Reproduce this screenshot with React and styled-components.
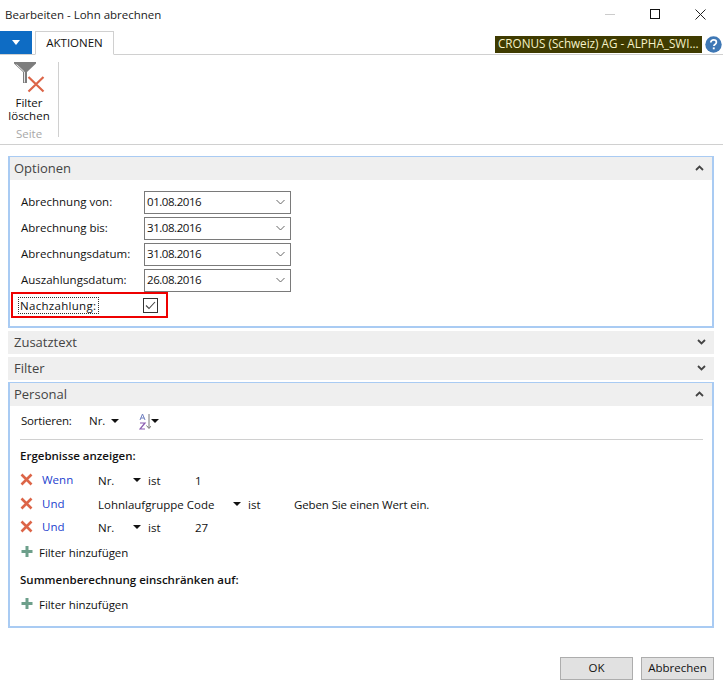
import React from 'react';
import styled, { createGlobalStyle } from 'styled-components';

const Global = createGlobalStyle`
  html, body { margin: 0; padding: 0; background: #fff; }
  body { font-family: "Open Sans", "Noto Sans", sans-serif; font-size: 11.5px; color: #111; }
`;
const Page = styled.div`
  width: 723px; height: 689px; display: flex; flex-direction: column; overflow: hidden; background: #fff;
`;
const TitleBar = styled.div`
  height: 31px; display: flex; align-items: center; justify-content: space-between; padding: 0 0 0 5px; box-sizing: border-box;
`;
const TitleText = styled.div`font-size: 11.5px; color: #222; padding-bottom: 3px;`;
const WinButtons = styled.div`display: flex; align-items: center; padding-right: 17px; gap: 35px; height: 100%; padding-bottom: 3px; box-sizing: border-box;`;
const TabRow = styled.div`
  height: 24px; display: flex; align-items: stretch; border-bottom: 1px solid #d0d0d0; box-sizing: border-box;
`;
const FileButton = styled.div`
  width: 32px; height: 23px; background: #0e6cc4; display: flex; align-items: center; justify-content: center;
`;
const Tab = styled.div`
  margin-left: 3px; width: 79px; height: 24px; box-sizing: border-box; border: 1px solid #d0d0d0; border-bottom: 1px solid #fff;
  display: flex; align-items: center; justify-content: center; font-size: 11.5px; color: #111; background: #fff; padding-bottom: 2px;
`;
const Company = styled.div`
  margin-left: auto; margin-top: 5px; height: 17px; width: 207px; box-sizing: border-box; background: #3f3b00; color: #f6f2c8;
  font-size: 11.7px; line-height: 15px; padding-left: 3px; white-space: nowrap; overflow: hidden;
`;
const Help = styled.div`width: 17px; height: 17px; margin: 5px 1px 0 3px;`;
const Ribbon = styled.div`
  height: 90px; border-bottom: 1px solid #d0d0d0; box-sizing: border-box; display: flex; padding-top: 7px;
`;
const RibbonGroup = styled.div`
  width: 58px; height: 75px; border-right: 1px solid #d0d0d0; display: flex; flex-direction: column; align-items: center;
`;
const RibbonIcon = styled.svg`width: 32px; height: 32px; flex: none;`;
const RibbonLabel = styled.div`font-size: 11.5px; line-height: 13px; text-align: center; color: #111; margin-top: 2px; flex: none;`;
const RibbonCaption = styled.div`font-size: 11.5px; line-height: 14px; color: #a8a8a8; margin-top: 5px; flex: none;`;
const Content = styled.div`padding: 11px 9px 0 8px; display: flex; flex-direction: column; flex: 1;`;
const Panel = styled.section`
  border: 2px solid #a9cbf3; box-sizing: border-box; height: ${p => p.$h}px; margin-bottom: ${p => p.$mb}px;
`;
const PanelHead = styled.div`
  height: 23px; background: #efefef; display: flex; align-items: center; justify-content: space-between;
  padding: 0 8px 2px ${p => p.$flat ? 6 : 4}px; box-sizing: border-box;
  font-size: 13px; color: #444; margin: ${p => p.$flat ? `0 0 ${p.$mb}px 0` : '-1px 0 0 0'};
`;
const Chevron = styled.svg`width: 9px; height: 6px; display: block;`;
const FieldList = styled.div`padding: 11px 0 0 11px; display: flex; flex-direction: column; gap: 3px;`;
const FieldRow = styled.div`display: flex; align-items: center; height: 23px;`;
const FieldLabel = styled.div`width: 123px; font-size: 11.5px; padding-bottom: 2px;`;
const DateInput = styled.div`
  width: 147px; height: 23px; box-sizing: border-box; border: 1px solid #7a7a7a; display: flex; align-items: center;
  justify-content: space-between; padding: 0 5px 2px 2px; font-size: 11.5px; letter-spacing: -0.45px;
`;
const CheckRow = styled.div`
  position: relative; display: flex; align-items: center; height: 23px; margin-top: 2px;
`;
const Highlight = styled.div`
  position: absolute; left: 1px; top: -2px; width: 157px; height: 26px; box-sizing: border-box; border: 2px solid #ee0000; pointer-events: none;
`;
const FocusLabel = styled.div`
  margin-left: 9px; width: 124px; font-size: 11.5px; padding-bottom: 1px;
  & > span { outline: 1px dotted #333; padding: 0 2px 0 1px; letter-spacing: 0.3px; }
`;
const CheckBox = styled.div`
  width: 13px; height: 13px; border: 1px solid #333; display: flex; align-items: center; justify-content: center;
`;
const PersonalBody = styled.div`padding: 0 9px 0 10px;`;
const SortRow = styled.div`display: flex; align-items: center; height: 34px; padding: 0 0 3px 1px; box-sizing: border-box; border-bottom: 1px solid #d0d0d0; font-size: 11.5px;`;
const SortLabel = styled.span`width: 68px; padding-bottom: 2px; letter-spacing: -0.2px;`;
const SortValue = styled.span`padding-bottom: 2px;`;
const AzIcon = styled.svg`width: 12px; height: 17px; margin-left: 20px;`;
const Arrow = styled.i`
  display: inline-block; width: 0; height: 0; border: 4px solid transparent; border-top: 4px solid #111; border-bottom: 0;
  margin-left: ${p => p.$ml ?? 0}px;
`;
const SectionTitle = styled.div`font-weight: 600; font-size: 11.5px; line-height: 16px; margin-top: ${p => p.$mt}px;`;
const FilterRow = styled.div`display: flex; align-items: center; height: 24px; font-size: 11.5px; margin-top: ${p => p.$mt ?? 0}px;`;
const FilterIcon = styled.svg`width: 13px; height: 13px; flex: none; margin-right: ${p => p.$mr}px; margin-bottom: 2px;`;
const Joiner = styled.span`width: 56px; color: #1d3fce; flex: none; padding-bottom: 2px;`;
const FieldName = styled.span`width: ${p => p.$w}px; flex: none; display: flex; align-items: center; justify-content: space-between; padding-right: 7px; box-sizing: border-box;`;
const Op = styled.span`width: ${p => p.$w}px; flex: none;`;
const Hint = styled.span`letter-spacing: -0.12px;`;
const AddRow = styled.div`display: flex; align-items: center; height: 24px; font-size: 11.5px; letter-spacing: -0.05px; margin-top: ${p => p.$mt ?? 0}px;`;
const Footer = styled.div`display: flex; justify-content: flex-end; gap: 8px; padding: 0 9px 9px 0;`;
const Button = styled.button`
  width: 73px; height: 23px; box-sizing: border-box; background: #e1e1e1; border: 1px solid #adadad; font-family: inherit; font-size: 11.5px; color: #111; padding: 0 0 2px;
`;

const Close = () => <svg width="11" height="11" viewBox="0 0 11 11"><path d="M.5.5l10 10M10.5.5l-10 10" stroke="#222" fill="none"/></svg>;
const X = () => <FilterIcon $mr={9} viewBox="0 0 13 13"><path d="M1.5 1.5l10 10M11.5 1.5l-10 10" stroke="#dc6548" strokeWidth="2.6" fill="none"/></FilterIcon>;
const Plus = () => <FilterIcon $mr={6} viewBox="0 0 13 13"><path d="M7 1v11M1.5 6.5h11" stroke="#6d9f8b" strokeWidth="3" fill="none"/></FilterIcon>;
const Down = () => <Chevron viewBox="0 0 9 6"><path d="M1 1l3.5 3.5L8 1" stroke="#444" strokeWidth="1.8" fill="none"/></Chevron>;
const Up = () => <Chevron viewBox="0 0 9 6"><path d="M1 5l3.5-3.5L8 5" stroke="#444" strokeWidth="1.8" fill="none"/></Chevron>;
const Caret = () => <svg width="9" height="6" viewBox="0 0 9 6"><path d="M.5 1l4 4 4-4" stroke="#666" fill="none"/></svg>;

const fields = [['Abrechnung von:', '01.08.2016'], ['Abrechnung bis:', '31.08.2016'], ['Abrechnungsdatum:', '31.08.2016'], ['Auszahlungsdatum:', '26.08.2016']];

export default function App() {
  return (
    <Page>
      <Global />
      <TitleBar>
        <TitleText>Bearbeiten - Lohn abrechnen</TitleText>
        <WinButtons>
          <svg width="10" height="1"><rect width="10" height="1" fill="#ccc"/></svg>
          <svg width="10" height="10"><rect x=".5" y=".5" width="9" height="9" stroke="#111" fill="none"/></svg>
          <Close />
        </WinButtons>
      </TitleBar>
      <TabRow>
        <FileButton><svg width="8" height="5"><path d="M0 0h8L4 5z" fill="#fff"/></svg></FileButton>
        <Tab>AKTIONEN</Tab>
        <Company>CRONUS (Schweiz) AG - ALPHA_SWI...</Company>
        <Help>
          <svg width="17" height="17" viewBox="0 0 17 17"><circle cx="8.5" cy="8.5" r="8.2" fill="#3f78b5"/><path d="M5.8 6.4c0-1.6 1.2-2.5 2.8-2.5s2.8.9 2.8 2.3c0 1.2-.7 1.7-1.5 2.3-.7.5-1 .8-1 1.6" stroke="#fff" strokeWidth="1.7" fill="none"/><rect x="7.8" y="11.4" width="1.9" height="1.9" fill="#fff"/></svg>
        </Help>
      </TabRow>
      <Ribbon>
        <RibbonGroup>
          <RibbonIcon viewBox="0 0 32 32">
            <path d="M1 0h22v1.5L14 10v11h-4V10L1 1.5z" fill="#7d7d7d"/>
            <path d="M3.5 2.5l8 7.5v10.5" stroke="#e8e8e8" fill="none"/>
            <path d="M15.5 15l15 14.5M30.5 15l-15 14.5" stroke="#dc6548" strokeWidth="2.2" fill="none"/>
          </RibbonIcon>
          <RibbonLabel>Filter<br/>löschen</RibbonLabel>
          <RibbonCaption>Seite</RibbonCaption>
        </RibbonGroup>
      </Ribbon>
      <Content>
        <Panel $h={172} $mb={3}>
          <PanelHead>Optionen<Up /></PanelHead>
          <FieldList>
            {fields.map(([l, v]) => (
              <FieldRow key={l}>
                <FieldLabel>{l}</FieldLabel>
                <DateInput>{v}<Caret /></DateInput>
              </FieldRow>
            ))}
          </FieldList>
          <CheckRow>
            <Highlight />
            <FocusLabel><span>Nachzahlung:</span></FocusLabel>
            <CheckBox><svg width="11" height="9" viewBox="0 0 11 9"><path d="M1 4.5l3 3 6-6.5" stroke="#444" strokeWidth="1.1" fill="none"/></svg></CheckBox>
          </CheckRow>
        </Panel>
        <PanelHead $flat $mb={3}>Zusatztext<Down /></PanelHead>
        <PanelHead $flat $mb={2}>Filter<Down /></PanelHead>
        <Panel $h={246} $mb={0}>
          <PanelHead>Personal<Up /></PanelHead>
          <PersonalBody>
            <SortRow>
              <SortLabel>Sortieren:</SortLabel>
              <SortValue>Nr.</SortValue><Arrow $ml={6} />
              <AzIcon viewBox="0 0 12 17">
                <path d="M1 7l2.5-6L6 7M1.8 5h3.4" stroke="#6f7fc0" fill="none"/>
                <path d="M1 10h5L1 16h5" stroke="#8a5cb0" fill="none" strokeWidth="1.2"/>
                <path d="M10 1v14M7.5 12.5l2.5 3 2.5-3" stroke="#777" fill="none"/>
              </AzIcon>
              <Arrow />
            </SortRow>
            <SectionTitle $mt={8}>Ergebnisse anzeigen:</SectionTitle>
            <FilterRow $mt={4}><X /><Joiner>Wenn</Joiner><FieldName $w={50}>Nr.<Arrow /></FieldName><Op $w={47}>ist</Op><Op $w={100}>1</Op></FilterRow>
            <FilterRow><X /><Joiner>Und</Joiner><FieldName $w={150}>Lohnlaufgruppe Code<Arrow /></FieldName><Op $w={46}>ist</Op><Hint>Geben Sie einen Wert ein.</Hint></FilterRow>
            <FilterRow $mt={-1}><X /><Joiner>Und</Joiner><FieldName $w={50}>Nr.<Arrow /></FieldName><Op $w={47}>ist</Op><Op $w={100}>27</Op></FilterRow>
            <AddRow $mt={1}><Plus />Filter hinzufügen</AddRow>
            <SectionTitle $mt={8}>Summenberechnung einschränken auf:</SectionTitle>
            <AddRow $mt={4}><Plus />Filter hinzufügen</AddRow>
          </PersonalBody>
        </Panel>
      </Content>
      <Footer>
        <Button>OK</Button>
        <Button>Abbrechen</Button>
      </Footer>
    </Page>
  );
}
